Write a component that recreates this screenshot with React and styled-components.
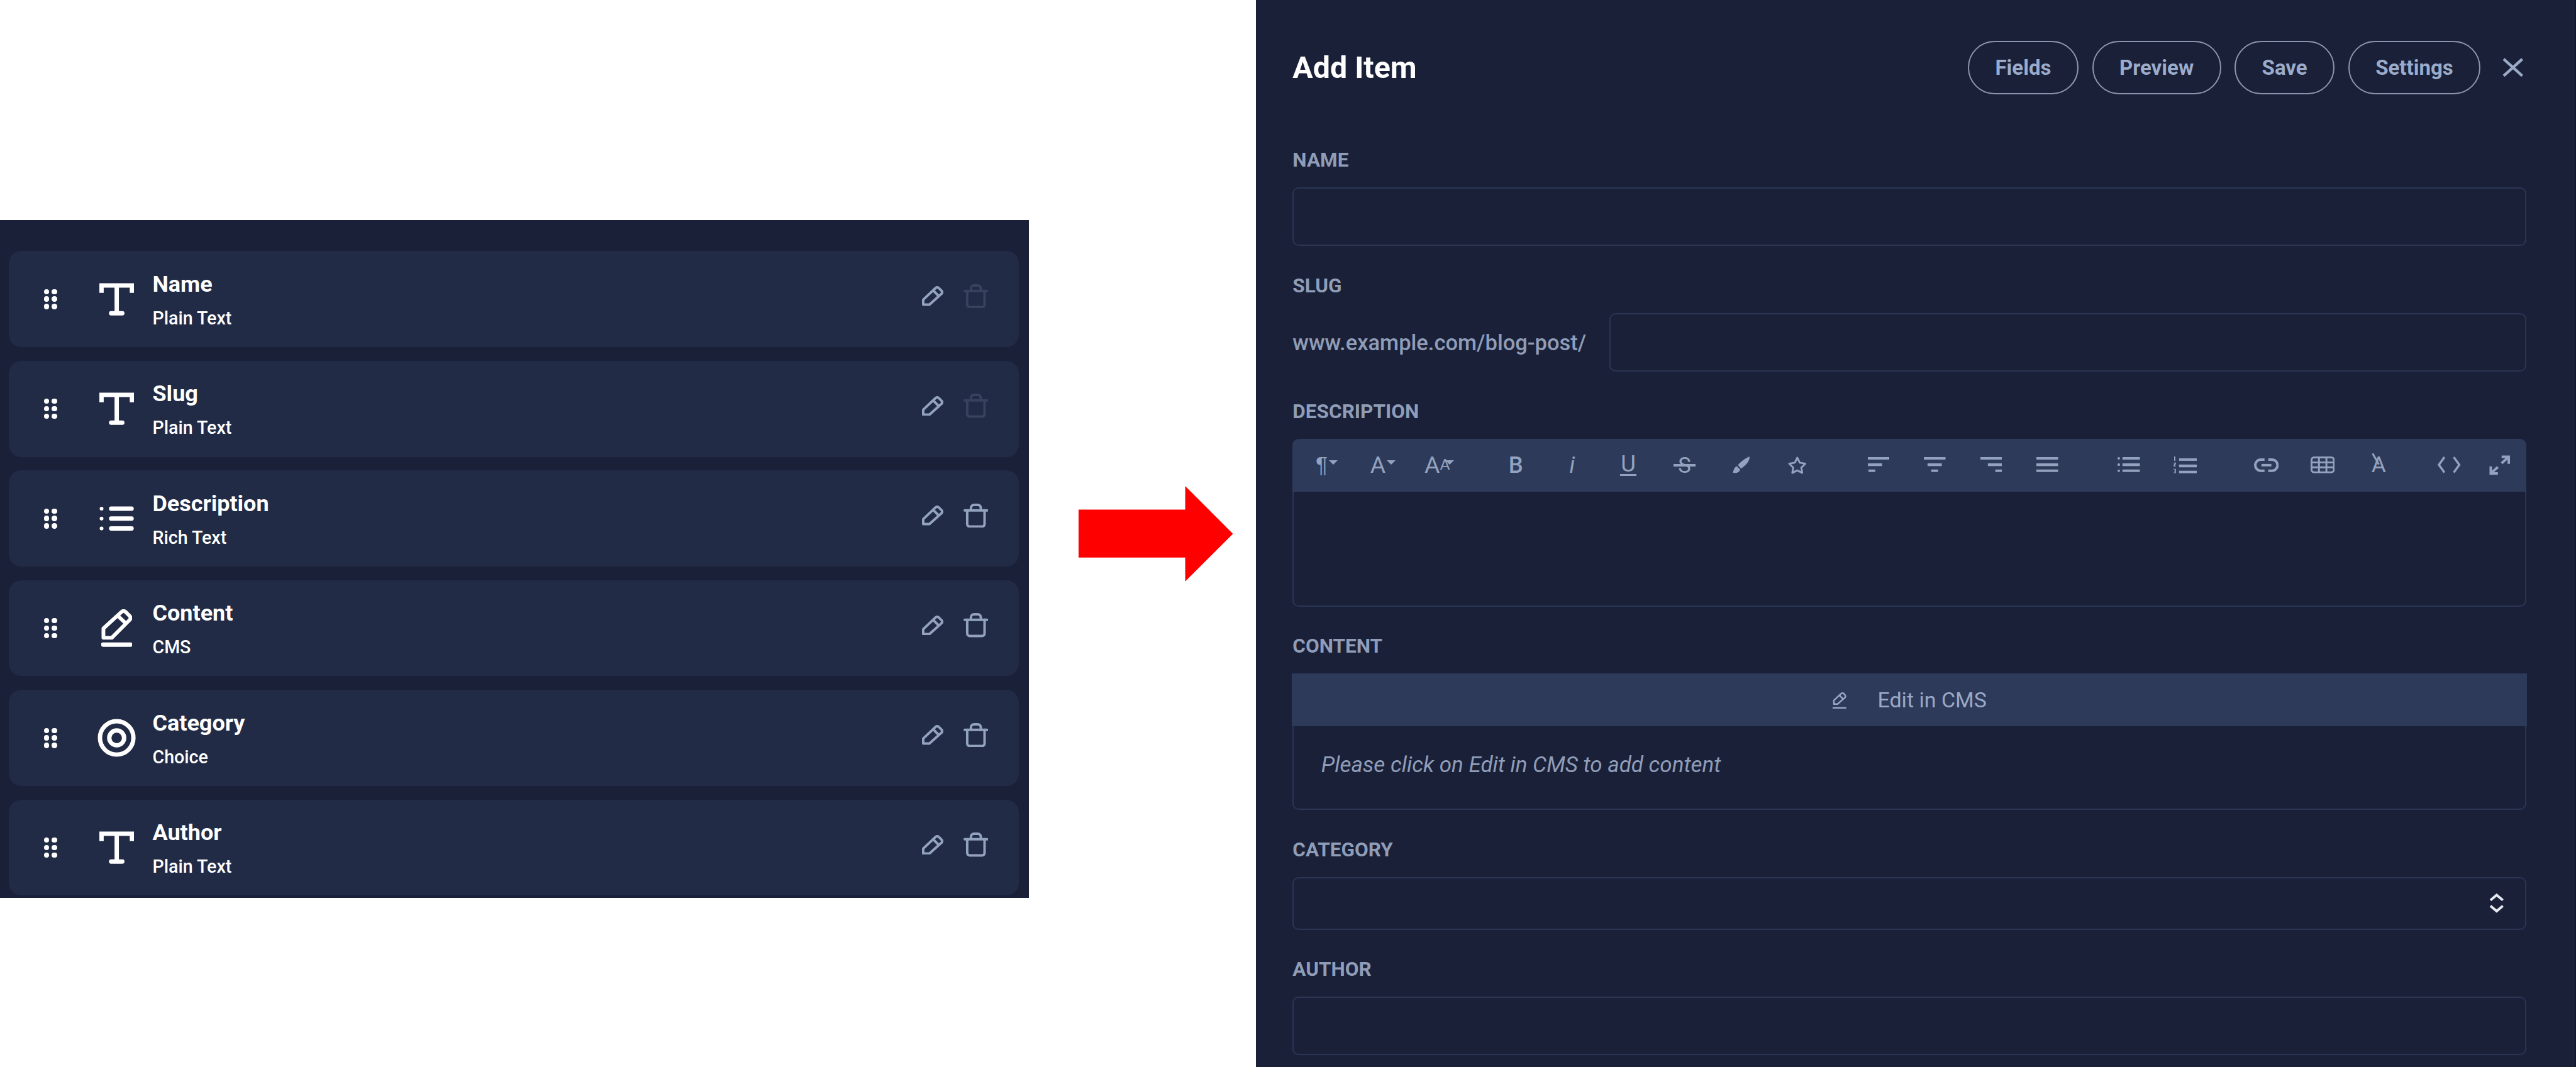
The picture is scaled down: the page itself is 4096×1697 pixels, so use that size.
import styled, { createGlobalStyle } from "styled-components"

const GlobalStyle = createGlobalStyle`
  html, body {
    margin: 0;
    background: #fff;
    overflow: hidden;
  }
  #root {
    font-family: Roboto, "Liberation Sans", sans-serif;
  }
`

const fields = [
  { name: "Name", type: "Plain Text", icon: "text", locked: true },
  { name: "Slug", type: "Plain Text", icon: "text", locked: true },
  { name: "Description", type: "Rich Text", icon: "list" },
  { name: "Content", type: "CMS", icon: "cms" },
  { name: "Category", type: "Choice", icon: "choice" },
  { name: "Author", type: "Plain Text", icon: "text" },
]

function TextIcon() {
  return (
    <svg width="56" height="53" viewBox="0 0 56 53" fill="none" stroke="currentColor" strokeWidth="7">
      <path d="M3.500 16V4H52.500V16" />
      <path d="M28 4V48" />
      <path d="M19 49H37" strokeLinecap="round" />
    </svg>
  )
}

function ListIcon() {
  return (
    <svg width="56" height="40" viewBox="0 0 56 40" fill="none" stroke="currentColor" strokeWidth="7" strokeLinecap="round">
      <path d="M19 4H52M19 20H52M19 36H52" />
      <path d="M3.500 4H3.600M3.500 20H3.600M3.500 36H3.600" strokeWidth="6" />
    </svg>
  )
}

function CmsIcon() {
  return (
    <svg width="50" height="61" viewBox="0 0 50 61" fill="none" stroke="currentColor" strokeWidth="6" strokeLinejoin="round">
      <path d="M3.500 46V31L33 4Q36 1.500 39 4L46 11Q48.500 14 46 17L17 46Z" />
      <path d="M26 10L41 24" />
      <path d="M3 57H47" strokeWidth="7" strokeLinecap="round" />
    </svg>
  )
}

function ChoiceIcon() {
  return (
    <svg width="62" height="62" viewBox="0 0 62 62" fill="none" stroke="currentColor" strokeWidth="7">
      <circle cx="31" cy="31" r="27" />
      <circle cx="31" cy="31" r="12" />
    </svg>
  )
}

const typeIcons = { text: TextIcon, list: ListIcon, cms: CmsIcon, choice: ChoiceIcon }

function PencilIcon() {
  return (
    <svg width="35" height="32" viewBox="0 0 35 32" fill="none" stroke="currentColor" strokeWidth="4" strokeLinejoin="round">
      <path d="M2 30V22L22 3Q24.500 1 27 3L32 8Q33.500 10.500 31.500 12.500L12 30Z" />
      <path d="M18 7L28 17" />
    </svg>
  )
}

function TrashIcon() {
  return (
    <svg width="40" height="39" viewBox="0 0 40 39" fill="none" stroke="currentColor" strokeWidth="4" strokeLinecap="round">
      <path d="M2 11H38" />
      <path d="M12 10V7A5 5 0 0 1 17 2H23A5 5 0 0 1 28 7V10" />
      <path d="M6 11V33A4 4 0 0 0 10 37H30A4 4 0 0 0 34 33V11" />
    </svg>
  )
}

function DragDots() {
  return (
    <DotGrid>
      {[0, 1, 2, 3, 4, 5].map(i => <Dot key={i} />)}
    </DotGrid>
  )
}

function AlignIcon({ x2, x3 }) {
  return (
    <svg width="35" height="25" viewBox="0 0 35 25" fill="currentColor">
      <rect x="0" y="0" width="35" height="4" />
      <rect x={x2} y="10" width={x2 === 0 && x3 === 0 ? 35 : 23} height="4.500" />
      <rect x={x3} y="20" width={x3 === 0 && x2 === 0 ? 35 : 11} height="4" />
    </svg>
  )
}

function BulletIcon() {
  return (
    <svg width="36" height="25" viewBox="0 0 36 25" fill="currentColor">
      <rect x="0" y="0" width="4" height="4" rx="2" />
      <rect x="0" y="10" width="4" height="4.500" rx="2" />
      <rect x="0" y="20" width="4" height="4" rx="2" />
      <rect x="8" y="0" width="28" height="4" />
      <rect x="8" y="10" width="28" height="4.500" />
      <rect x="8" y="20" width="28" height="4" />
    </svg>
  )
}

function NumberIcon() {
  return (
    <svg width="38" height="28" viewBox="0 0 38 28" fill="currentColor">
      <rect x="1" y="0" width="2" height="7" />
      <path d="M0 10H4V12L2 15H4V16H0V14L2 11H0Z" />
      <path d="M0 20H4V27H0V26H2.500V24H1V23H2.500V21H0Z" />
      <rect x="9" y="3" width="29" height="4" />
      <rect x="9" y="13" width="29" height="4.500" />
      <rect x="9" y="23" width="29" height="4" />
    </svg>
  )
}

function BrushIcon() {
  return (
    <svg width="29" height="27" viewBox="0 0 29 27" fill="currentColor">
      <path d="M28 0C29.500 7 22 15 14.500 19.500L9.500 14C15 7 22 3 28 0Z" />
      <path d="M7.500 15.500L13 21C12.500 25.500 6 28 1 26C3 23.500 2.500 18.500 7.500 15.500Z" />
    </svg>
  )
}

function StarIcon() {
  return (
    <svg width="30" height="28" viewBox="0 0 30 28" fill="none" stroke="currentColor" strokeWidth="3" strokeLinejoin="round">
      <path d="M15 2L19 10L28 11.500L21.500 18L23 26.500L15 22.500L7 26.500L8.500 18L2 11.500L11 10Z" />
    </svg>
  )
}

function LinkIcon() {
  return (
    <svg width="40" height="24" viewBox="0 0 40 24" fill="none" stroke="currentColor" strokeWidth="4">
      <path d="M17 3H11A9 9 0 0 0 11 21H17" />
      <path d="M23 3H29A9 9 0 0 1 29 21H23" />
      <path d="M12 12H28" />
    </svg>
  )
}

function TableIcon() {
  return (
    <svg width="39" height="27" viewBox="0 0 39 27" fill="none" stroke="currentColor" strokeWidth="3">
      <rect x="1.500" y="1.500" width="36" height="24" rx="4" />
      <path d="M1 9.500H38M1 17.500H38M13.500 1V26M25.500 1V26" />
    </svg>
  )
}

function CodeIcon() {
  return (
    <svg width="39" height="29" viewBox="0 0 39 29" fill="none" stroke="currentColor" strokeWidth="3.500">
      <path d="M12 2L3 14.500L12 27" />
      <path d="M27 2L36 14.500L27 27" />
    </svg>
  )
}

function ExpandIcon() {
  return (
    <svg width="34" height="32" viewBox="0 0 34 32" fill="none" stroke="currentColor" strokeWidth="4">
      <path d="M20 2.500H31.500V14" />
      <path d="M31 3L20 13" />
      <path d="M14 29.500H2.500V18" />
      <path d="M3 29L14 19" />
    </svg>
  )
}

function FieldRow({ field }) {
  const Icon = typeIcons[field.icon]
  return (
    <Row>
      <DragDots />
      <TypeIcon><Icon /></TypeIcon>
      <RowText>
        <RowName>{field.name}</RowName>
        <RowType>{field.type}</RowType>
      </RowText>
      <RowActions>
        <ActionIcon><PencilIcon /></ActionIcon>
        <ActionIcon $locked={field.locked}><TrashIcon /></ActionIcon>
      </RowActions>
    </Row>
  )
}

function EditorToolbar() {
  return (
    <Toolbar>
      <ToolGroup $gap={33}>
        <ToolButton><Glyph $size={36} $family='"Liberation Sans"'>¶</Glyph><Caret /></ToolButton>
        <ToolButton><Glyph $size={38}>A</Glyph><Caret /></ToolButton>
        <ToolButton>
          <Glyph $size={38}>A</Glyph>
          <Glyph $size={25}>A</Glyph>
          <Caret $overlap />
        </ToolButton>
      </ToolGroup>
      <ToolGroup $gap={41}>
        <ToolButton><Glyph $size={37} $weight={500}>B</Glyph></ToolButton>
        <ToolButton><Glyph $size={37} $italic>i</Glyph></ToolButton>
        <ToolButton><UnderGlyph>U</UnderGlyph></ToolButton>
        <ToolButton><StrikeGlyph>S</StrikeGlyph></ToolButton>
        <ToolButton><BrushIcon /></ToolButton>
        <ToolButton><StarIcon /></ToolButton>
      </ToolGroup>
      <ToolGroup $gap={41}>
        <ToolButton><AlignIcon x2={0} x3={1} /></ToolButton>
        <ToolButton><AlignIcon x2={6} x3={12} /></ToolButton>
        <ToolButton><AlignIcon x2={12} x3={24} /></ToolButton>
        <ToolButton><AlignIcon x2={0} x3={0} /></ToolButton>
      </ToolGroup>
      <ToolGroup $gap={40}>
        <ToolButton><BulletIcon /></ToolButton>
        <ToolButton><NumberIcon /></ToolButton>
      </ToolGroup>
      <ToolGroup $gap={27}>
        <ToolButton><LinkIcon /></ToolButton>
        <ToolButton><TableIcon /></ToolButton>
        <ToolButton><ClearGlyph>A</ClearGlyph></ToolButton>
      </ToolGroup>
      <ToolGroup $width={82}>
        <ToolButton><CodeIcon /></ToolButton>
        <ToolButton><ExpandIcon /></ToolButton>
      </ToolGroup>
    </Toolbar>
  )
}

export default function App() {
  return (
    <Page>
      <GlobalStyle />
      <ListPanel>
        {fields.map(field => <FieldRow key={field.name} field={field} />)}
      </ListPanel>
      <Arrow viewBox="0 0 249 154" width="249" height="154">
        <path d="M0 38H172V0L249 77L172 154V115.500H0Z" fill="#ff0000" />
      </Arrow>
      <FormPanel>
        <Header>
          <Title>Add Item</Title>
          <HeaderActions>
            <PillButton>Fields</PillButton>
            <PillButton>Preview</PillButton>
            <PillButton>Save</PillButton>
            <PillButton>Settings</PillButton>
            <CloseButton>
              <svg width="34" height="31" viewBox="0 0 34 31" fill="none" stroke="currentColor" strokeWidth="4.500">
                <path d="M2 2L32 29M32 2L2 29" />
              </svg>
            </CloseButton>
          </HeaderActions>
        </Header>

        <Field>
          <Label>Name</Label>
          <Input $height={95} />
        </Field>

        <Field>
          <Label>Slug</Label>
          <SlugRow>
            <SlugPrefix>www.example.com/blog-post/</SlugPrefix>
            <Input $height={95} />
          </SlugRow>
        </Field>

        <Field>
          <Label>Description</Label>
          <EditorToolbar />
          <EditorBody />
        </Field>

        <Field>
          <Label>Content</Label>
          <CmsBox>
            <CmsBar>
              <CmsPencil>
                <svg width="24" height="28" viewBox="0 0 24 28" fill="none" stroke="currentColor" strokeWidth="2.500" strokeLinejoin="round">
                  <path d="M3 20V14L15 3Q17 1.500 19 3L21 5.500Q22.500 7.500 21 9.500L9 20Z" />
                  <path d="M12 6L18 12" />
                  <path d="M1 26.500H23" strokeWidth="3" />
                </svg>
              </CmsPencil>
              Edit in CMS
            </CmsBar>
            <CmsHint>Please click on Edit in CMS to add content</CmsHint>
          </CmsBox>
        </Field>

        <Field>
          <Label>Category</Label>
          <SelectBox>
            <svg width="24" height="31" viewBox="0 0 24 31" fill="none" stroke="currentColor" strokeWidth="4">
              <path d="M2 11L12 2.500L22 11" />
              <path d="M2 20L12 28.500L22 20" />
            </svg>
          </SelectBox>
        </Field>

        <Field>
          <Label>Author</Label>
          <Input $height={94} />
        </Field>
      </FormPanel>
    </Page>
  )
}

const Page = styled.div`
  zoom: 0.9858;
  width: 4155px;
  height: 1723px;
  display: flex;
  align-items: flex-start;
  overflow: hidden;
`

const ListPanel = styled.div`
  box-sizing: border-box;
  flex: none;
  width: 1660px;
  height: 1094px;
  margin-top: 355px;
  padding: 50px 17px 0 14px;
  display: flex;
  flex-direction: column;
  gap: 22px;
  overflow: hidden;
  background: #1a2037;
`

const Row = styled.div`
  flex: none;
  height: 155px;
  padding: 0 49px 0 57px;
  display: flex;
  align-items: center;
  border-radius: 20px;
  background: #212b45;
  color: #fff;
`

const DotGrid = styled.div`
  flex: none;
  display: grid;
  grid-template-columns: repeat(2, 8.500px);
  grid-auto-rows: 8.500px;
  gap: 3.500px 4px;
`

const Dot = styled.span`
  border-radius: 50%;
  background: #fff;
`

const TypeIcon = styled.div`
  flex: none;
  width: 70px;
  margin-left: 61px;
  display: flex;
  justify-content: center;
  svg {
    display: block;
  }
`

const RowText = styled.div`
  flex: 1;
  align-self: flex-start;
  margin-left: 23px;
  padding-top: 33px;
`

const RowName = styled.div`
  font-size: 36.500px;
  line-height: 41px;
  font-weight: 700;
`

const RowType = styled.div`
  margin-top: 18px;
  font-size: 29px;
  line-height: 34px;
  font-weight: 500;
`

const RowActions = styled.div`
  display: flex;
  align-items: center;
  gap: 32px;
  margin-bottom: 9px;
`

const ActionIcon = styled.div`
  display: flex;
  color: ${props => (props.$locked ? "#36425f" : "#93a2bf")};
`

const Arrow = styled.svg`
  flex: none;
  margin: 784px 0 0 80px;
`

const FormPanel = styled.div`
  box-sizing: border-box;
  flex: none;
  width: 2129px;
  height: 1723px;
  margin-left: 37px;
  padding: 66px 78px 0 59px;
  background: #1a2037;
  border-right: 3px solid #131829;
`

const Header = styled.div`
  display: flex;
  align-items: center;
  justify-content: space-between;
  height: 86px;
  margin-bottom: 87px;
`

const Title = styled.h2`
  margin: 0;
  font-size: 49px;
  font-weight: 700;
  color: #fff;
`

const HeaderActions = styled.div`
  display: flex;
  align-items: center;
  gap: 22px;
`

const PillButton = styled.button`
  box-sizing: border-box;
  height: 86px;
  padding: 0 42px;
  border: 2.500px solid #8a96ad;
  border-radius: 43px;
  background: transparent;
  color: #9aabcb;
  font-family: inherit;
  font-size: 33.500px;
  font-weight: 700;
`

const CloseButton = styled.div`
  display: flex;
  margin: 0 5px 0 13px;
  color: #9aa9c5;
`

const Field = styled.div`
  margin-bottom: 45px;
`

const Label = styled.label`
  display: block;
  height: 38px;
  margin-bottom: 25px;
  font-size: 32px;
  line-height: 38px;
  font-weight: 700;
  text-transform: uppercase;
  color: #8f9db8;
`

const Input = styled.div`
  box-sizing: border-box;
  flex: 1;
  height: ${props => props.$height}px;
  border: 3px solid #2a3654;
  border-radius: 10px;
`

const SlugRow = styled.div`
  display: flex;
  align-items: center;
  gap: 37px;
`

const SlugPrefix = styled.span`
  font-size: 35px;
  font-weight: 500;
  color: #8f9db8;
`

const Toolbar = styled.div`
  box-sizing: border-box;
  display: flex;
  height: 85px;
  padding-left: 9.650px;
  border-radius: 10px 10px 0 0;
  background: #2e3a5a;
  color: #93a2bf;
`

const ToolGroup = styled.div`
  display: flex;
  margin-right: ${props => props.$gap || 0}px;
  > * {
    width: ${props => props.$width || 90.700}px;
  }
`

const ToolButton = styled.div`
  flex: none;
  display: flex;
  align-items: center;
  justify-content: center;
`

const Glyph = styled.span`
  font-family: ${props => props.$family || "inherit"};
  font-size: ${props => props.$size}px;
  font-weight: ${props => props.$weight || 400};
  font-style: ${props => (props.$italic ? "italic" : "normal")};
  line-height: 1;
`

const Caret = styled.span`
  width: 0;
  height: 0;
  margin: -8px 0 0 ${props => (props.$overlap ? "-8px" : "2px")};
  border-style: solid;
  border-width: 8px 7.500px 0;
  border-color: #93a2bf transparent transparent;
`

const UnderGlyph = styled.span`
  font-size: 37px;
  line-height: 32px;
  border-bottom: 4px solid #93a2bf;
  padding: 0 1px;
`

const StrikeGlyph = styled.span`
  position: relative;
  font-size: 35px;
  line-height: 1;
  &::after {
    content: "";
    position: absolute;
    left: -7px;
    right: -7px;
    top: 16px;
    height: 3.500px;
    background: #93a2bf;
  }
`

const ClearGlyph = styled.span`
  position: relative;
  font-size: 36px;
  line-height: 1;
  &::after {
    content: "";
    position: absolute;
    left: 5px;
    top: -2px;
    width: 3px;
    height: 20px;
    background: #93a2bf;
    transform: rotate(-30deg);
  }
`

const EditorBody = styled.div`
  box-sizing: border-box;
  height: 186px;
  border: 3px solid #2a3654;
  border-top: none;
  border-radius: 0 0 10px 10px;
`

const CmsBox = styled.div`
  box-sizing: border-box;
  height: 220px;
  border: 3px solid #2a3654;
  border-top: none;
  border-radius: 0 0 10px 10px;
`

const CmsBar = styled.div`
  height: 85px;
  margin: 0 -3px;
  display: flex;
  align-items: center;
  justify-content: center;
  gap: 49px;
  background: #2e3a5a;
  font-size: 34.500px;
  color: #9aa9c5;
`

const CmsPencil = styled.span`
  display: flex;
`

const CmsHint = styled.div`
  padding: 42px 0 0 44px;
  font-size: 35.500px;
  line-height: 40px;
  font-style: italic;
  color: #8f9db8;
`

const SelectBox = styled.div`
  box-sizing: border-box;
  height: 85px;
  padding-right: 34px;
  display: flex;
  align-items: center;
  justify-content: flex-end;
  border: 3px solid #2a3654;
  border-radius: 10px;
  color: #e6e9f0;
`
